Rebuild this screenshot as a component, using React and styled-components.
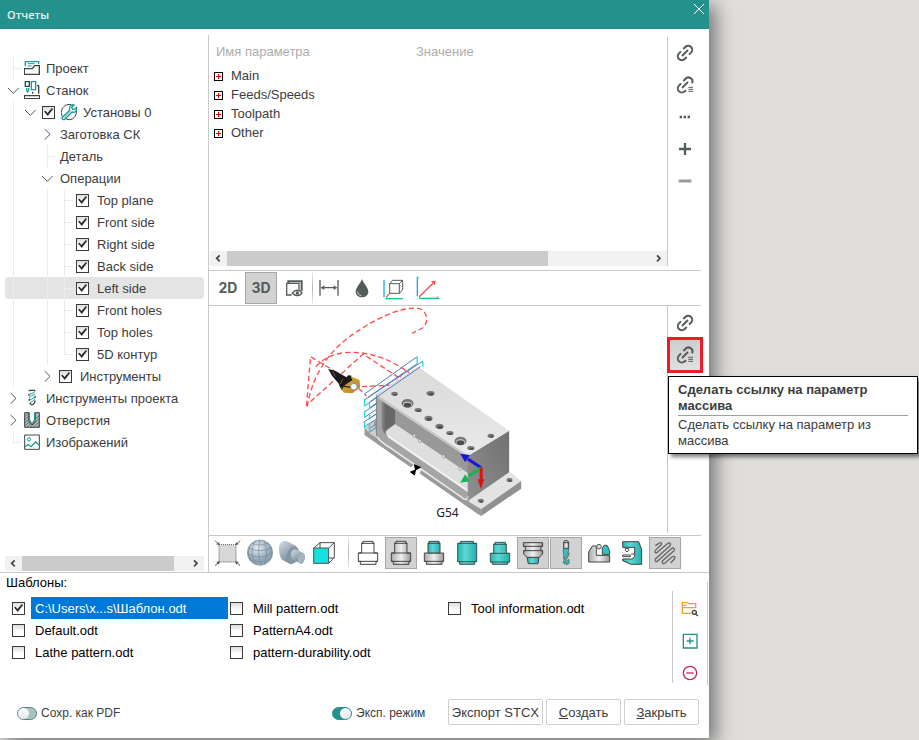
import React, { useState } from "react";
import styled, { createGlobalStyle, css } from "styled-components";

const GlobalStyle = createGlobalStyle`
  * {
    box-sizing: border-box;
  }
  body {
    margin: 0;
    background-color: #dfdedc;
    color: #3c3c3c;
    font-family: "Liberation Sans", Arial, sans-serif;
    font-size: 13px;
    line-height: 16px;
  }
  button {
    padding: 0;
    border: 0;
    background: none;
    color: inherit;
    font: inherit;
    cursor: pointer;
  }
  svg {
    display: block;
    flex: none;
  }
`;

const Desktop = styled.div`
  min-height: 100vh;
  padding: 0 210px 2px 0;
  display: flex;
  overflow: hidden;
`;
const Window = styled.div`
  flex: 1;
  min-width: 0;
  display: flex;
  flex-direction: column;
  background-color: #fff;
  box-shadow: 6px 6px 18px rgba(0, 0, 0, 0.5);
`;
const TitleBar = styled.header`
  height: 29px;
  padding-left: 7px;
  display: flex;
  justify-content: space-between;
  align-items: center;
  background-color: #25918d;
  color: #e4f2f1;
  font-family: "Open Sans", "Noto Sans", sans-serif;
  font-size: 11px;
  font-weight: 600;
`;
const Close = styled.button`
  width: 20px;
  height: 18px;
  display: flex;
  align-items: center;
  justify-content: center;
  align-self: flex-start;
`;
const Workspace = styled.div`
  flex: 1;
  display: flex;
`;

/* tree */
const TreePane = styled.nav`
  width: 208px;
  padding: 28px 4px 1px 5px;
  display: flex;
  flex-direction: column;
  justify-content: space-between;
`;
const Tree = styled.ul`
  margin: 0;
  padding: 0;
  list-style: none;
`;
const TreeRow = styled.li`
  height: 22px;
  display: flex;
  align-items: center;
  white-space: nowrap;
  border-radius: 4px;
  background-color: ${(props) => (props.$active ? "#e4e4e4" : "transparent")};
`;
const Guide = styled.span`
  position: relative;
  width: 17px;
  height: 22px;
  display: flex;
  align-items: center;
  justify-content: center;
  &::before {
    content: "";
    position: absolute;
    left: 8px;
    top: 0;
    width: 1px;
    height: ${(props) => (props.$kind === "corner" ? "11px" : "22px")};
    background-color: ${(props) =>
      props.$kind === "line" || props.$kind === "tee" || props.$kind === "corner"
        ? "#ececec"
        : "transparent"};
  }
  &::after {
    content: "";
    position: absolute;
    left: 8px;
    top: 11px;
    width: 9px;
    height: 1px;
    background-color: ${(props) =>
      props.$kind === "tee" || props.$kind === "corner"
        ? "#ececec"
        : "transparent"};
  }
`;
const TreeIcon = styled.span`
  margin-left: ${(props) => (props.$afterCheck ? "6px" : "2px")};
`;
const TreeText = styled.span`
  margin-left: ${(props) => props.$gap}px;
  padding-top: 2px;
`;
const TreeLabel = styled.label`
  margin-left: 3px;
  display: flex;
  align-items: center;
`;
const CheckBox = styled.input`
  appearance: none;
  position: relative;
  flex: none;
  width: 13px;
  height: 13px;
  margin: 0;
  border: 1px solid #3a3a3a;
  background: linear-gradient(#dcdcdc, #fff 60%);
  &:checked::before {
    content: "";
    position: absolute;
    inset: 1px;
    background-color: #2c2c2c;
    clip-path: polygon(0 45%, 18% 36%, 38% 60%, 88% 6%, 100% 16%, 42% 94%);
  }
`;

/* scrollbar */
const Scroll = styled.div`
  height: 15px;
  display: flex;
  background-color: #f1f1f1;
`;
const ScrollArrow = styled.button`
  width: 17px;
  display: flex;
  align-items: center;
  justify-content: center;
`;
const ScrollTrack = styled.div`
  flex: 1;
`;
const ScrollThumb = styled.div`
  width: ${(props) => props.$size};
  height: 100%;
  background-color: #cbcbcb;
`;

/* right side */
const Content = styled.main`
  flex: 1;
  min-width: 0;
  margin-top: 6px;
  display: flex;
  flex-direction: column;
  border-left: 1px solid #c8c8c8;
`;
const ParamArea = styled.section`
  height: 235px;
  padding: 2px 0 4px 1px;
  display: flex;
`;
const ParamMain = styled.div`
  flex: 1;
  display: flex;
  flex-direction: column;
  justify-content: space-between;
`;
const ParamTable = styled.table`
  width: 100%;
  border-spacing: 0;
  padding-left: 2px;
  table-layout: fixed;
`;
const HeadCell = styled.th`
  width: ${(props) => props.$width};
  height: 29px;
  padding: 0 4px;
  text-align: left;
  font-weight: normal;
  color: #adadad;
`;
const ParamCell = styled.td`
  height: 19px;
  padding: 0 2px;
`;
const ParamName = styled.div`
  display: flex;
  align-items: center;
  gap: 8px;
`;
const Expand = styled.button`
  width: 9px;
  height: 9px;
  margin-top: 1px;
  border: 1px solid #000;
`;
const Rail = styled.div`
  width: 42px;
  padding: ${(props) => (props.$inset ? "1px 0 0 1px" : "0 0 0 1px")};
  margin-bottom: ${(props) => (props.$inset ? "2px" : "0")};
  border-left: 1px solid #c8c8c8;
`;
const Tools = styled.div`
  margin-right: 8px;
  padding: 1px 0 ${(props) => (props.$last ? "3px" : "1px")} 3px;
  display: flex;
  border-top: 1px solid #c8c8c8;
  border-bottom: ${(props) => (props.$last ? "0" : "1px solid #c8c8c8")};
`;
const ToolGroup = styled.div`
  display: flex;
  gap: ${(props) => props.$gap}px;
`;
const Separator = styled.div`
  width: 1px;
  margin: ${(props) => (props.$wide ? "0 3px 0 8px" : "0 0 0 2px")};
  background: linear-gradient(#eee, #b4b4b4 50%, #eee);
`;
const ToolButton = styled.button`
  width: 32px;
  height: 32px;
  display: flex;
  align-items: center;
  justify-content: center;
  color: #545b5b;
  font-family: Inter, sans-serif;
  font-weight: 700;
  font-size: 14px;
  ${(props) =>
    props.$active &&
    css`
      background-color: #d2d2d2;
      box-shadow: inset 0 0 0 1px #a6a6a6;
    `}
  ${(props) =>
    props.$marked &&
    css`
      background: linear-gradient(#cdcdcd, #e0e0e0);
      outline: 3px solid #ed1c24;
      outline-offset: -1px;
    `}
`;
const Viewer = styled.section`
  flex: 1;
  display: flex;
`;
const Scene = styled.div`
  flex: 1;
  min-width: 0;
  padding-left: 1px;
  svg {
    width: 100%;
    height: 228px;
  }
`;
const TipAnchor = styled.div`
  position: relative;
  width: 32px;
`;
const Tip = styled.div`
  position: absolute;
  z-index: 2;
  top: 37px;
  left: -1px;
  width: 250px;
  padding: 5px 9px 4px;
  border: 1px solid #000;
  background-color: #fff;
  box-shadow: 3px 3px 4px rgba(0, 0, 0, 0.5);
`;
const TipTitle = styled.strong`
  display: block;
  padding-bottom: 1px;
  border-bottom: 1px solid #a0a0a0;
  margin-bottom: 1px;
`;

/* templates */
const Templates = styled.section`
  display: flex;
  border-top: 1px solid #c8c8c8;
`;
const TemplateMain = styled.div`
  flex: 1;
  color: #000;
`;
const TemplateTitle = styled.div`
  height: 24px;
  padding: 2px 6px;
`;
const TemplateList = styled.div`
  padding: 0 8px 0 12px;
  display: grid;
  grid-template-columns: repeat(3, 1fr);
  grid-template-rows: repeat(3, 22px);
  grid-auto-flow: column;
  column-gap: 2px;
`;
const TemplateItem = styled.label`
  display: flex;
  align-items: center;
  gap: 6px;
`;
const TemplateName = styled.span`
  flex: 1;
  padding: 4px 4px 2px;
  ${(props) =>
    props.$active &&
    css`
      background-color: #0078d7;
      color: #fff;
    `}
`;
const TemplateSide = styled.div`
  height: 103px;
  margin: 9px 1px 0 0;
  padding-top: 9px;
  border-right: 1px solid #c8c8c8;
`;
const TemplateTools = styled.div`
  width: 35px;
  padding: 8px 7px 0;
  display: flex;
  flex-direction: column;
  gap: 12px;
  border-left: 1px solid #c8c8c8;
`;

/* footer */
const Footer = styled.footer`
  padding: 14px 10px 13px 17px;
  display: flex;
  align-items: center;
`;
const Toggle = styled.label`
  min-width: ${(props) => (props.$first ? "315px" : "0")};
  padding-top: 2px;
  display: flex;
  align-items: center;
  gap: 4px;
  font-size: 12px;
`;
const Switch = styled.input`
  appearance: none;
  width: 20px;
  height: 13px;
  margin: 0;
  display: flex;
  border: 1px solid #56827f;
  border-radius: 7px;
  background-color: #a8c2c0;
  &::before {
    content: "";
    width: 11px;
    height: 11px;
    border-radius: 50%;
    background: linear-gradient(#fff, #e6e6e6);
  }
  &:checked {
    justify-content: flex-end;
    border-color: #25918d;
    background-color: #25918d;
  }
`;
const Actions = styled.div`
  margin-left: auto;
  display: flex;
  gap: 3px;
`;
const Action = styled.button`
  min-width: 75px;
  height: 26px;
  padding: 2px 3px 0;
  border: 1px solid #d0d0d0;
  border-radius: 2px;
  background-color: #fff;
`;

const DARK = "#3c4444";
const GREY = "#545b5b";
const TEAL = "#1d9c97";

function Glyph({ x = 0, y = 0, w = 96, h = 96, children }) {
  return (
    <svg
      width={w / 3}
      height={h / 3}
      viewBox={`${x} ${y} ${w} ${h}`}
      fill="none"
      stroke={GREY}
      strokeWidth="4"
      aria-hidden="true"
    >
      {children}
    </svg>
  );
}

function Chevron({ open }) {
  return (
    <Glyph x={2} w={33} h={36}>
      <path
        d={open ? "M2 12 L18 28 L34 12" : "M10 3 L26 19 L10 35"}
        stroke="#555"
        strokeWidth="3"
      />
    </Glyph>
  );
}

const ProjectIcon = (
  <Glyph x={72} y={177} w={48} h={54}>
    <path d="M76 199 V185 H116 V193" stroke={TEAL} />
    <path d="M83 191 H104 M83 198 H95" stroke={TEAL} strokeWidth="3" />
    <path d="M73 206 H97 L104 197 H118 V223 H73 Z" stroke={DARK} />
  </Glyph>
);
const MachineIcon = (
  <Glyph x={72} y={243} w={48} h={54}>
    <path d="M76 245 H88 V259 H76 Z M98 275 V281 M116 257 V281 M111 257 H117 M73 287 H119 V296 H73 Z" stroke={DARK} />
    <path d="M94 245 H107 V269 H94 Z M80 264 V271 L83 276 L86 271 V264" stroke={TEAL} />
  </Glyph>
);
const SetupIcon = (
  <Glyph x={183} y={309} w={48} h={54}>
    <path d="M213 314 C196 310 184 324 184 337 C184 343 186 348 188 350 M229 329 C232 343 222 359 208 359 C202 359 199 357 197 355" stroke={DARK} strokeWidth="3" />
    <path d="M188 351 L209 331 C206 321 213 312 222 315 L215 322 L218 328 L224 328 L230 322 C233 331 225 339 216 336 L194 358 C188 361 183 356 188 351 Z" stroke={TEAL} />
    <path d="M190 355 L212 333" stroke={TEAL} strokeWidth="2" />
  </Glyph>
);
const DrillIcon = (
  <Glyph x={72} y={477} w={48} h={54}>
    <path d="M88 484 V481 H104 V484 M87 491 V497 M105 497 V505 M88 507 V513 M105 511 L104 518 L98 524 H94 L89 519" stroke={DARK} />
    <path d="M105 484 C103 493 89 487 86 497 M105 491 C101 499 90 495 87 504 H90 M105 499 C101 509 90 505 87 514 M104 507 C100 516 92 514 90 519" stroke={TEAL} strokeWidth="3" />
  </Glyph>
);
const HolesIcon = (
  <Glyph x={72} y={543} w={48} h={54}>
    <path d="M74 548 H86 V568 C87 578 91 582 96 585 C101 582 105 578 106 568 V548 H118 V592 H74 Z" fill="#b4b8b8" stroke={DARK} strokeWidth="3" />
    <path d="M75 560 L86 549 M75 569 L86 558 M75 578 L87 567 M75 588 L90 574 M82 591 L94 579 M92 591 L118 565 M102 591 L118 575 M107 567 L118 556 M112 591 L118 585" stroke={DARK} strokeWidth="2" />
    <path d="M88 547 V568 L92 577 L96 581 L100 577 L104 568 V547" fill="#fff" stroke={TEAL} />
  </Glyph>
);
const ImageIcon = (
  <Glyph x={72} y={609} w={48} h={54}>
    <path d="M74 615 H118 V658 H74 Z" stroke={DARK} strokeWidth="3" />
    <circle cx="87" cy="628" r="5" stroke={TEAL} strokeWidth="3" />
    <path d="M75 651 L84 643 L93 650 L107 636 L118 646" stroke={TEAL} />
  </Glyph>
);

const treeRows = [
  { guides: ["tee"], icon: ProjectIcon, text: "Проект" },
  { guides: ["open"], icon: MachineIcon, text: "Станок" },
  { guides: ["line", "open"], check: true, icon: SetupIcon, text: "Установы 0" },
  { guides: ["line", "", "closed"], text: "Заготовка СК" },
  { guides: ["line", "", "tee"], text: "Деталь" },
  { guides: ["line", "", "open"], text: "Операции" },
  { guides: ["line", "", "line", "tee"], check: true, text: "Top plane" },
  { guides: ["line", "", "line", "tee"], check: true, text: "Front side" },
  { guides: ["line", "", "line", "tee"], check: true, text: "Right side" },
  { guides: ["line", "", "line", "tee"], check: true, text: "Back side" },
  { guides: ["line", "", "line", "tee"], check: true, text: "Left side" },
  { guides: ["line", "", "line", "tee"], check: true, text: "Front holes" },
  { guides: ["line", "", "line", "tee"], check: true, text: "Top holes" },
  { guides: ["line", "", "line", "corner"], check: true, text: "5D контур" },
  { guides: ["line", "", "closed"], check: true, text: "Инструменты" },
  { guides: ["closed"], icon: DrillIcon, text: "Инструменты проекта" },
  { guides: ["closed"], icon: HolesIcon, text: "Отверстия" },
  { guides: ["corner"], icon: ImageIcon, text: "Изображений" },
];

function TreeItem({ row, active, onSelect }) {
  const { guides, check, icon, text } = row;
  const gap = icon ? 6 : check ? 8 : 4;
  const body = (
    <>
      {check && <CheckBox type="checkbox" defaultChecked />}
      {icon && <TreeIcon $afterCheck={check}>{icon}</TreeIcon>}
      <TreeText $gap={gap}>{text}</TreeText>
    </>
  );
  return (
    <TreeRow $active={active} onClick={() => onSelect(text)}>
      {guides.map((kind, i) => (
        <Guide key={i} $kind={kind}>
          {kind === "open" && <Chevron open />}
          {kind === "closed" && <Chevron />}
        </Guide>
      ))}
      {check ? <TreeLabel>{body}</TreeLabel> : body}
    </TreeRow>
  );
}

function ScrollBar({ size }) {
  return (
    <Scroll>
      <ScrollArrow aria-label="Влево">
        <Glyph w={27} h={27}>
          <path d="M17 4 L8 13 L17 22" stroke="#444" strokeWidth="5" />
        </Glyph>
      </ScrollArrow>
      <ScrollTrack>
        <ScrollThumb $size={size} />
      </ScrollTrack>
      <ScrollArrow aria-label="Вправо">
        <Glyph w={27} h={27}>
          <path d="M9 4 L18 13 L9 22" stroke="#444" strokeWidth="5" />
        </Glyph>
      </ScrollArrow>
    </Scroll>
  );
}

function LinkIcon({ list }) {
  return (
    <Glyph>
      <g strokeWidth="6">
        <path d={list ? "M43 36 L49 30 A12 12 0 0 1 69 43" : "M43 36 L49 30 A12 12 0 0 1 66 47 L60 53"} />
        <path d={list ? "M51 64 L47 67 A12 12 0 0 1 30 50 L36 43" : "M53 60 L47 66 A12 12 0 0 1 30 49 L36 43"} />
        <path d="M39 57 L57 39" />
      </g>
      {list && <path d="M58 55 H72 M58 61 H72 M58 67 H72" strokeWidth="3" />}
    </Glyph>
  );
}

function RailButton({ label, children, ...rest }) {
  return (
    <ToolButton aria-label={label} {...rest}>
      {children}
    </ToolButton>
  );
}

function Params() {
  return (
    <ParamArea>
      <ParamMain>
        <ParamTable>
          <thead>
            <tr>
              <HeadCell $width="200px">Имя параметра</HeadCell>
              <HeadCell $width="auto">Значение</HeadCell>
            </tr>
          </thead>
          <tbody>
            {["Main", "Feeds/Speeds", "Toolpath", "Other"].map((name) => (
              <tr key={name}>
                <ParamCell>
                  <ParamName>
                    <Expand aria-label={`Развернуть ${name}`}>
                      <Glyph w={21} h={21}>
                        <path d="M3 10.5 H18 M10.5 3 V18" stroke="#e00" strokeWidth="3" />
                      </Glyph>
                    </Expand>
                    {name}
                  </ParamName>
                </ParamCell>
                <ParamCell />
              </tr>
            ))}
          </tbody>
        </ParamTable>
        <ScrollBar size="76%" />
      </ParamMain>
      <Rail>
        <RailButton label="Ссылка">
          <LinkIcon />
        </RailButton>
        <RailButton label="Ссылка на массив">
          <LinkIcon list />
        </RailButton>
        <RailButton label="Ещё">
          <Glyph>
            <path d="M32 48 H39 M44 48 H51 M56 48 H63" strokeWidth="7" />
          </Glyph>
        </RailButton>
        <RailButton label="Добавить">
          <Glyph>
            <path d="M30 48 H66 M48 30 V66" strokeWidth="7" />
          </Glyph>
        </RailButton>
        <RailButton label="Удалить">
          <Glyph>
            <path d="M28 48 H68" stroke="#ccc" strokeWidth="12" />
            <path d="M31 48 H65" stroke="#999" strokeWidth="6" />
          </Glyph>
        </RailButton>
      </Rail>
    </ParamArea>
  );
}

function ViewTools() {
  const [mode, setMode] = useState("3D");
  return (
    <Tools>
      <ToolGroup $gap={1}>
        <ToolButton $active={mode === "2D"} onClick={() => setMode("2D")}>
          2D
        </ToolButton>
        <ToolButton $active={mode === "3D"} onClick={() => setMode("3D")}>
          3D
        </ToolButton>
        <ToolButton aria-label="Слои">
          <Glyph x={219} y={96}>
            <path d="M260 165 H245 V130 H282 V149" />
            <path d="M250 130 V124 H290 V152" strokeWidth="6" />
            <path d="M262 159 C270 148 284 148 291 159 C284 169 270 169 262 159 Z" fill="#fff" />
            <circle cx="277" cy="159" r="5" fill={GREY} stroke="none" />
          </Glyph>
        </ToolButton>
      </ToolGroup>
      <Separator />
      <ToolGroup $gap={1}>
        <ToolButton aria-label="Размеры">
          <Glyph x={324} y={96}>
            <path d="M345 120 V167 M399 120 V167 M349 143 H395" />
            <path d="M348 143 L358 136 V150 Z M396 143 L386 136 V150 Z" fill={GREY} stroke="none" />
          </Glyph>
        </ToolButton>
        <ToolButton aria-label="Заливка">
          <Glyph x={423} y={96}>
            <path d="M471 117 C475 130 490 142 490 155 C490 165 481 172 471 172 C461 172 452 165 452 155 C452 142 467 130 471 117 Z" fill={GREY} stroke="none" />
            <path d="M458 155 C458 162 463 166 469 167" stroke="#d5d9d9" strokeWidth="3" />
          </Glyph>
        </ToolButton>
        <ToolButton aria-label="Куб">
          <Glyph x={522} y={96}>
            <path d="M537 120 V172" stroke="#1ba7f2" />
            <path d="M541 176 H594" stroke="#19c97b" />
            <path d="M543 172 L554 160" stroke="#f05050" />
            <path d="M554 131 H583 V160 H554 Z M554 131 L563 121 H593 V149 L583 160 M583 131 L593 121" strokeWidth="3" />
          </Glyph>
        </ToolButton>
        <ToolButton aria-label="Оси">
          <Glyph x={621} y={96}>
            <path d="M637 115 V169" stroke="#1ba7f2" />
            <path d="M636 109 L644 115 H634 Z" fill="#1ba7f2" stroke="none" />
            <path d="M642 175 H697" stroke="#19c97b" />
            <path d="M696 168 L705 177 H696 Z" fill="#19c97b" stroke="none" />
            <path d="M642 171 L685 129" stroke="#f05050" />
            <path d="M678 123 L692 122 L690 136 Z" fill="#f05050" stroke="none" />
          </Glyph>
        </ToolButton>
      </ToolGroup>
    </Tools>
  );
}

const holes = [
  [312, 281, 10, 6],
  [420, 280, 12, 7],
  [383, 330, 11, 6],
  [414, 355, 12, 8],
  [447, 379, 12, 8],
  [478, 399, 11, 6],
  [541, 444, 11, 6],
  [601, 407, 10, 6],
  [657, 540, 9, 6],
  [571, 602, 9, 6],
];

function Model() {
  return (
    <svg viewBox="-240 18 1368 684" role="img" aria-label="G54">
      <defs>
        <linearGradient id="top" x1="0" y1="0" x2="0" y2="1">
          <stop offset="0" stopColor="#dadada" />
          <stop offset="1" stopColor="#e9e9e9" />
        </linearGradient>
        <linearGradient id="side" x1="0" y1="1" x2="1" y2="0">
          <stop offset="0" stopColor="#909090" />
          <stop offset="1" stopColor="#707070" />
        </linearGradient>
        <linearGradient id="gold" x1="0" y1="0" x2="1" y2="1">
          <stop offset="0" stopColor="#d9ad45" />
          <stop offset="1" stopColor="#b88a26" />
        </linearGradient>
      </defs>
      <g fill="none" stroke="#ff4d4d" strokeWidth="4" strokeDasharray="16 9">
        <path d="M50 320 C70 200 140 130 210 88 C280 42 345 20 384 25 C412 31 415 70 396 84 L365 100" />
        <path d="M48 318 L60 170 L130 212" />
        <path d="M60 305 L218 162 L328 235" />
        <path d="M76 200 C112 160 160 152 222 160 C280 170 320 192 364 224" />
        <path d="M214 260 L310 255 L345 210" />
        <path d="M204 265 L228 288" />
      </g>

      <path d="M222 385 L256 360 L535 600 L572 627 V648 L556 638 L222 405 Z" fill="#9a9a9a" />
      <path d="M222 385 L250 366 L262 412 L533 604 L545 606 L572 627 L535 606 L240 402 Z" fill="#cfcfcf" />
      <path d="M533 602 L658 515 L692 543 L572 627 Z" fill="#e3e3e3" />
      <path d="M692 543 V566 L572 648 V627 Z" fill="#909090" />
      <path d="M256 282 L533 467 V602 L270 422 L256 405 Z" fill="#a5a5a5" />
      <path d="M533 467 L656 392 V517 L533 602 Z" fill="url(#side)" />
      <path d="M256 282 L383 200 L656 392 L533 467 Z" fill="url(#top)" />
      <path d="M256 282 L533 467 V475 L262 294 Z" fill="#c6c6c6" />
      <path d="M274 304 L533 476 V574 L305 420 C285 407 274 394 274 380 Z" fill="#7d7d7d" />
      <path d="M282 310 L314 331 V372 L282 394 Z" fill="#686868" />
      <path d="M314 331 L533 476 V524 L314 372 Z" fill="#999" />
      <path d="M314 372 L533 520 V576 L292 410 C284 402 284 396 290 390 Z" fill="#dedede" />
      <path d="M292 404 L533 570 V577 L292 412 Z" fill="#f3f3f3" />
      <path d="M262 412 C266 424 280 430 300 444 L514 592 C524 602 532 600 533 588" fill="none" stroke="#e6e6e6" strokeWidth="5" />
      <path d="M258 290 V408 M533 470 V600" stroke="#777" strokeWidth="2" />

      {holes.map(([x, y, rx, ry]) => (
        <g key={`${x}-${y}`}>
          <ellipse cx={x} cy={y} rx={rx} ry={ry} fill="#777" />
          <ellipse cx={x + 2} cy={y + 3} rx={rx - 4} ry={ry - 3} fill="#505050" />
        </g>
      ))}
      {[[351, 310], [510, 423]].map(([x, y]) => (
        <g key={x}>
          <ellipse cx={x} cy={y} rx="18" ry="13" fill="#777" />
          <ellipse cx={x} cy={y + 3} rx="13" ry="8" fill="#d5d5d5" />
          <ellipse cx={x} cy={y + 5} rx="11" ry="7" fill="#4d4d4d" />
        </g>
      ))}
      {[[371, 407], [388, 423], [459, 469], [509, 506]].map(([x, y]) => (
        <ellipse key={x} cx={x} cy={y} rx="4" ry="5" fill="#eee" stroke="#888" strokeWidth="2" />
      ))}

      <g fill="none" stroke="#5480b8" strokeWidth="3">
        <path d="M222 282 L380 170 M232 292 L380 191 M222 300 L397 183 M237 306 L390 200 M222 318 L258 293 M237 324 L258 309 M220 337 L258 312 M222 352 L258 328 M237 356 L258 341 M220 366 L258 342 M222 380 L258 357 M237 386 L258 371 M237 396 L258 382" />
      </g>
      <path d="M380 170 V191 M397 183 V200 M222 296 V318 M237 310 V328 M222 334 V352 M237 340 V360 M222 366 V384 M237 372 V398" stroke="#1fe0ea" strokeWidth="4" />

      <path d="M146 259 L172 226 L207 240 L209 262 L186 280 L160 278 Z" fill="url(#gold)" />
      <path d="M113 207 L134 212 L168 232 L176 224 L186 240 L150 264 L144 250 L125 228 Z" fill="#181818" />
      <path d="M152 268 L182 227 M161 259 L184 262" stroke="#2a2210" strokeWidth="4" />
      <path d="M127 214 L134 230 M157 236 L150 252" stroke="#c66b52" strokeWidth="2" />
      <circle cx="190" cy="260" r="10" fill="#fff" stroke="#8a8a8a" strokeWidth="3" />

      <circle cx="375" cy="510" r="16" fill="#fff" />
      <path d="M375 510 L372 494 L390 502 Z M375 510 L360 516 L372 525 Z" fill="#000" stroke="#000" strokeWidth="3" />

      <path d="M572 503 L532 477" stroke="#1616d8" strokeWidth="9" />
      <path d="M509 461 L538 465 L524 487 Z" fill="#1616d8" />
      <path d="M572 503 L534 529" stroke="#19b355" strokeWidth="9" />
      <path d="M509 548 L524 523 L538 544 Z" fill="#19b355" />
      <path d="M572 503 V540" stroke="#e01010" strokeWidth="9" />
      <path d="M571 568 L562 538 H581 Z" fill="#e01010" />

      <text x="437" y="650" fill="#222" fontFamily="Noto Sans, sans-serif" fontSize="36">
        G54
      </text>
    </svg>
  );
}

function SceneView() {
  return (
    <Viewer>
      <Scene>
        <Model />
      </Scene>
      <Rail $inset>
        <RailButton label="Ссылка">
          <LinkIcon />
        </RailButton>
        <TipAnchor>
          <RailButton label="Сделать ссылку" $marked>
            <LinkIcon list />
          </RailButton>
          <Tip role="tooltip">
            <TipTitle>Сделать ссылку на параметр массива</TipTitle>
            Сделать ссылку на параметр из массива
          </Tip>
        </TipAnchor>
      </Rail>
    </Viewer>
  );
}

function SceneTools() {
  return (
    <Tools $last>
      <svg width="0" height="0" aria-hidden="true">
        <defs>
          <linearGradient id="steel">
            <stop offset="0" stopColor="#aaa" />
            <stop offset="0.5" stopColor="#f0f0f0" />
            <stop offset="1" stopColor="#999" />
          </linearGradient>
          <linearGradient id="aqua">
            <stop offset="0" stopColor="#27b5b1" />
            <stop offset="0.4" stopColor="#5ad8d4" />
            <stop offset="1" stopColor="#2aaeaa" />
          </linearGradient>
          <radialGradient id="ball" cx="0.4" cy="0.3">
            <stop offset="0" stopColor="#e6edf2" />
            <stop offset="1" stopColor="#93a6b6" />
          </radialGradient>
          <linearGradient id="metal" x1="0" y1="0" x2="0.6" y2="1">
            <stop offset="0" stopColor="#d3dce4" />
            <stop offset="1" stopColor="#6b7f90" />
          </linearGradient>
        </defs>
      </svg>
      <ToolGroup $gap={0}>
        <ToolButton aria-label="Показать всё">
          <Glyph x={21} y={21}>
            <path d="M42 44 H93 V96 H42 Z" fill="#d8d8d8" strokeWidth="3" strokeDasharray="3 3" />
            <path d="M30 32 L42 44 M105 32 L93 44 M30 107 L42 96 M105 107 L93 96" strokeWidth="3" />
            <path d="M44 46 L34 43 L42 36 Z M91 46 L101 43 L93 36 Z M44 93 L34 96 L42 104 Z M91 93 L101 96 L93 104 Z" fill={GREY} stroke="none" />
          </Glyph>
        </ToolButton>
        <ToolButton aria-label="Сфера">
          <Glyph x={117} y={21}>
            <circle cx="165" cy="68" r="38" fill="url(#ball)" stroke="#8195a6" strokeWidth="2" />
            <path d="M130 53 C150 65 181 65 200 52 M127 70 C147 84 183 84 203 68 M132 86 C150 98 180 98 198 85 M141 39 C153 47 174 48 188 38 M153 32 C136 52 138 86 156 105 M165 30 C159 56 159 82 169 106 M177 32 C186 52 188 85 176 105 M190 40 C203 55 204 80 190 96 M141 39 C126 56 126 80 144 99" stroke="#73899b" strokeWidth="2" />
          </Glyph>
        </ToolButton>
        <ToolButton aria-label="Вал">
          <Glyph x={213} y={21}>
            <path d="M222 55 C222 37 233 31 247 34 L273 48 L278 84 L258 103 L231 89 C225 83 222 68 222 55 Z" fill="url(#metal)" stroke="none" />
            <ellipse cx="264" cy="75" rx="18" ry="27" fill="#8296a7" stroke="none" transform="rotate(15 264 75)" />
            <path d="M260 65 C266 57 273 58 278 61 L295 69 C303 75 300 96 290 101 L265 91 C257 86 256 73 260 65 Z" fill="url(#metal)" stroke="none" />
            <ellipse cx="289" cy="85" rx="10" ry="16" fill="#a3b3c0" stroke="none" transform="rotate(15 289 85)" />
          </Glyph>
        </ToolButton>
        <ToolButton aria-label="Куб">
          <Glyph x={309} y={21}>
            <path d="M326 54 L345 38 H388 V82 L371 100 M371 54 L388 38 M345 38 V54 M371 84 H388" stroke="#4b4b4b" strokeWidth="3" />
            <path d="M326 54 H371 V100 H326 Z" fill="#15e0dc" stroke="#4b5555" strokeWidth="3" />
          </Glyph>
        </ToolButton>
      </ToolGroup>
      <Separator $wide />
      <ToolGroup $gap={1}>
        <ToolButton aria-label="Контур">
          <Glyph x={441} y={21}>
            <path d="M474 34 H504 V39 H507 V69 H518 V94 H513 V103 H466 V94 H460 V69 H470 V39 H474 Z M470 40 H507 M460 69 H518 M460 94 H518" fill="#fff" stroke="#444" strokeWidth="3" />
          </Glyph>
        </ToolButton>
        <ToolButton $active aria-label="Шпиндель">
          <Glyph x={540} y={21}>
            <path d="M573 34 H603 V39 H606 V69 H617 V94 H612 V103 H565 V94 H559 V69 H569 V39 H573 Z M569 40 H606 M559 69 H617 M559 94 H617" fill="url(#steel)" stroke="#444" strokeWidth="3" />
          </Glyph>
        </ToolButton>
        <ToolButton aria-label="Патрон">
          <Glyph x={639} y={21}>
            <path d="M658 69 H716 V94 H711 V103 H664 V94 H658 Z M658 94 H716" fill="url(#steel)" stroke="#444" strokeWidth="3" />
            <path d="M672 34 H702 V39 H705 V69 H669 V39 H672 Z M669 40 H705" fill="url(#aqua)" stroke="#444" strokeWidth="3" />
          </Glyph>
        </ToolButton>
        <ToolButton aria-label="Заготовка">
          <Glyph x={3} y={21}>
            <path d="M32 34 H70 V40 H80 V95 H74 V103 H29 V95 H23 V40 H32 Z M23 40 H80 M23 95 H80" fill="url(#aqua)" stroke="#3d5555" strokeWidth="3" />
          </Glyph>
        </ToolButton>
        <ToolButton aria-label="Деталь">
          <Glyph x={102} y={21}>
            <path d="M135 37 H166 V42 H169 V70 H179 V96 H173 V103 H127 V96 H121 V70 H131 V42 H135 Z M131 43 H169 M121 70 H179 M121 96 H179" fill="url(#aqua)" stroke="#3d5555" strokeWidth="3" />
          </Glyph>
        </ToolButton>
        <ToolButton $active aria-label="Оправка">
          <Glyph x={201} y={21}>
            <path d="M231 82 H267 L264 101 H235 Z" fill="url(#aqua)" stroke="#444" strokeWidth="3" />
            <path d="M220 38 H278 V49 H273 V62 H278 V72 L268 82 H231 L221 72 V62 H226 V49 H220 Z M220 49 H278 M221 62 H278" fill="url(#steel)" stroke="#444" strokeWidth="3" />
          </Glyph>
        </ToolButton>
        <ToolButton $active aria-label="Инструмент">
          <Glyph x={300} y={21}>
            <path d="M341 55 V37 L344 32 H352 L356 37 V55 Z M341 38 H356" fill="url(#steel)" stroke="#444" strokeWidth="3" />
            <path d="M340 56 H356 C358 68 346 76 341 88 C343 72 338 66 340 56 Z M357 68 C357 82 348 84 345 102 L340 99 C340 86 352 82 357 68 Z M357 88 V101 L348 104 C348 96 351 92 357 88 Z" fill="#35c5c0" stroke="#3d5555" strokeWidth="2" />
          </Glyph>
        </ToolButton>
        <ToolButton aria-label="Оснастка">
          <Glyph x={399} y={21}>
            <path d="M416 96 V66 L427 48 H439 V76 H479 V96 Z" fill="url(#steel)" stroke="#444" strokeWidth="3" />
            <path d="M457 73 V54 L463 46 H471 L479 62 V73 Z" fill="#2fc4bf" stroke="#444" strokeWidth="3" />
            <circle cx="447" cy="50" r="7" fill="#ddd" strokeWidth="3" />
          </Glyph>
        </ToolButton>
        <ToolButton aria-label="Станок">
          <Glyph x={498} y={21}>
            <path d="M518 35 H566 L575 58 V103 H543 L518 92 V87 H547 L554 79 V52 H518 Z" fill="url(#aqua)" stroke="#444" strokeWidth="3" />
            <path d="M518 75 H541 V80 H518 Z M543 72 H553" fill="#fff" stroke="#444" strokeWidth="3" />
            <path d="M526 55 H536 V61 L531 66 L526 61 Z" fill="#fff" stroke="#444" strokeWidth="3" />
          </Glyph>
        </ToolButton>
        <ToolButton $active aria-label="Траектория">
          <Glyph x={597} y={21}>
            <path d="M616 47 L628 39 C635 36 637 42 632 46 L616 61 C612 67 617 71 623 66 L652 41 C659 36 665 41 659 48 L617 86 C612 93 618 98 624 92 L664 56 C671 51 677 57 671 63 L638 92 C634 98 639 104 646 98 L666 81 C673 76 678 82 673 87 L662 99" stroke="#666" />
          </Glyph>
        </ToolButton>
      </ToolGroup>
    </Tools>
  );
}

const templates = [
  "C:\\Users\\x...s\\Шаблон.odt",
  "Default.odt",
  "Lathe pattern.odt",
  "Mill pattern.odt",
  "PatternA4.odt",
  "pattern-durability.odt",
  "Tool information.odt",
];

function TemplatePanel() {
  return (
    <Templates>
      <TemplateMain>
        <TemplateTitle>Шаблоны:</TemplateTitle>
        <TemplateList>
          {templates.map((name, i) => (
            <TemplateItem key={name}>
              <CheckBox type="checkbox" defaultChecked={i === 0} />
              <TemplateName $active={i === 0}>{name}</TemplateName>
            </TemplateItem>
          ))}
        </TemplateList>
      </TemplateMain>
      <TemplateSide>
        <TemplateTools>
          <button aria-label="Открыть папку">
            <Glyph x={750} y={87} w={60} h={60}>
              <path d="M783 130 H757 V98 H772 L776 101 H797 V115 M757 113 H797 M757 106 H770" stroke="#f0a030" />
              <circle cx="793" cy="127" r="6" stroke={DARK} />
              <path d="M797 132 L804 138" stroke={DARK} />
            </Glyph>
          </button>
          <button aria-label="Добавить шаблон">
            <Glyph x={750} y={183} w={60} h={60}>
              <path d="M760 193 H801 V234 H760 Z M770 213 H791 M780 203 V223" stroke="#1f908c" />
            </Glyph>
          </button>
          <button aria-label="Удалить шаблон">
            <Glyph x={750} y={279} w={60} h={60}>
              <circle cx="780" cy="309" r="20" stroke="#cf2462" />
              <path d="M769 309 H791" stroke="#cf2462" />
            </Glyph>
          </button>
        </TemplateTools>
      </TemplateSide>
    </Templates>
  );
}

function App() {
  const [selected, setSelected] = useState("Left side");
  return (
    <Desktop>
      <GlobalStyle />
      <Window>
        <TitleBar>
          Отчеты
          <Close aria-label="Закрыть окно">
            <Glyph w={36} h={36}>
              <path d="M3 3 L33 33 M33 3 L3 33" stroke="#fff" strokeWidth="3" />
            </Glyph>
          </Close>
        </TitleBar>
        <Workspace>
          <TreePane>
            <Tree>
              {treeRows.map((row) => (
                <TreeItem
                  key={row.text}
                  row={row}
                  active={row.text === selected}
                  onSelect={setSelected}
                />
              ))}
            </Tree>
            <ScrollBar size="92%" />
          </TreePane>
          <Content>
            <Params />
            <ViewTools />
            <SceneView />
            <SceneTools />
          </Content>
        </Workspace>
        <TemplatePanel />
        <Footer>
          <Toggle $first>
            <Switch type="checkbox" />
            Сохр. как PDF
          </Toggle>
          <Toggle>
            <Switch type="checkbox" defaultChecked />
            Эксп. режим
          </Toggle>
          <Actions>
            <Action>Экспорт STCX</Action>
            <Action>
              <u>С</u>оздать
            </Action>
            <Action>
              <u>З</u>акрыть
            </Action>
          </Actions>
        </Footer>
      </Window>
    </Desktop>
  );
}

export default App;
